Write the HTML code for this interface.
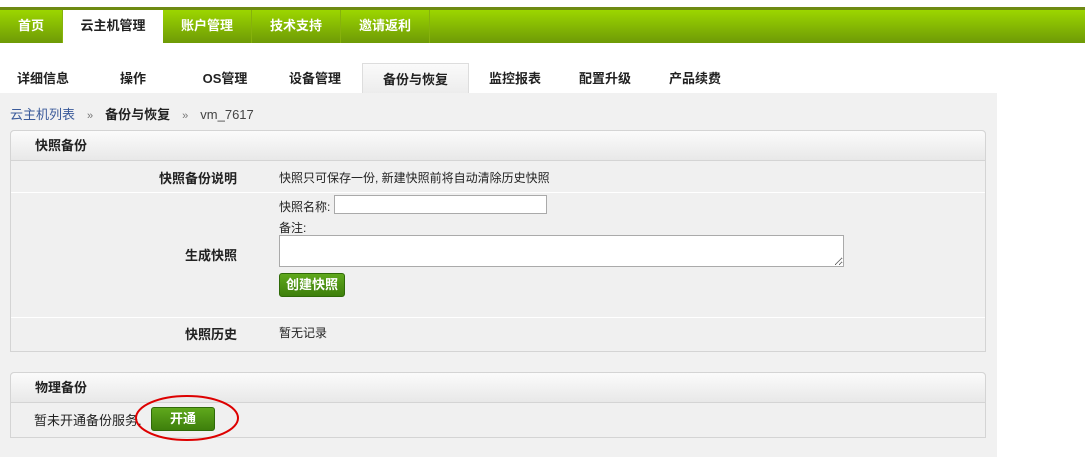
<!DOCTYPE html>
<html><head><meta charset="utf-8"><style>
*{margin:0;padding:0;box-sizing:border-box}
body{width:1085px;height:468px;background:#fff;font-family:"Liberation Sans","Noto Sans CJK SC",sans-serif;font-size:12px;color:#222;position:relative;overflow:hidden}
.top{position:absolute;left:0;top:7px;width:1085px;height:36px;border-top:3px solid #6e8a12;background:linear-gradient(#9cd600,#6e9a06)}
.top div{position:absolute;top:0;height:33px;line-height:32px;color:#fff;font-weight:bold;font-size:13px;text-align:center;border-right:1px solid #86b20c}
.top .on{background:#fff;color:#222;border:none}
.sub div{position:absolute;top:63px;height:31px;line-height:32px;font-weight:bold;font-size:13px;text-align:center}
.sub .on{background:linear-gradient(#fafafa,#ececec);border:1px solid #ddd;border-bottom:none}
.main{position:absolute;left:0;top:93px;width:997px;height:364px;background:#f1f1f1}
.panel{position:absolute;left:10px;width:976px;border:1px solid #d4d4d4;border-radius:4px 4px 0 0;background:#f0f0f0}
.ph{height:30px;line-height:30px;padding-left:24px;font-weight:bold;font-size:13px;background:linear-gradient(#fbfbfb,#e8e8e8);border-bottom:1px solid #d4d4d4;border-radius:4px 4px 0 0}
.row{position:absolute;left:0;width:974px;border-bottom:1px solid #fff}
.lbl{position:absolute;right:748px;font-weight:bold;font-size:13px}
.val{position:absolute;left:268px}
.btn{position:absolute;background:linear-gradient(#5fa81c,#3e7f0c);border:1px solid #2f6a08;border-radius:3px;color:#fff;font-weight:bold;font-size:13px;text-align:center}
input,textarea{position:absolute;border:1px solid #aaa;background:#fff}
</style></head><body>
<div class="top">
<div style="left:0;width:63px">首页</div>
<div class="on" style="left:63px;width:100px">云主机管理</div>
<div style="left:163px;width:89px">账户管理</div>
<div style="left:252px;width:89px">技术支持</div>
<div style="left:341px;width:89px">邀请返利</div>
</div>
<div class="sub">
<div style="left:0;width:86px">详细信息</div>
<div style="left:100px;width:66px">操作</div>
<div style="left:190px;width:70px">OS管理</div>
<div style="left:275px;width:80px">设备管理</div>
<div class="on" style="left:362px;width:107px">备份与恢复</div>
<div style="left:475px;width:80px">监控报表</div>
<div style="left:565px;width:80px">配置升级</div>
<div style="left:655px;width:80px">产品续费</div>
</div>
<div class="main">
<div style="position:absolute;left:10px;top:11px;font-size:13px"><span style="color:#3a5a9a">云主机列表</span><span style="color:#777;margin:0 12px;font-size:11px">»</span><b>备份与恢复</b><span style="color:#777;margin:0 12px;font-size:11px">»</span><span style="color:#444">vm_7617</span></div>
<div class="panel" style="top:37px;height:222px">
<div class="ph">快照备份</div>
<div class="row" style="top:30px;height:32px"><span class="lbl" style="top:7px">快照备份说明</span><span class="val" style="top:8px">快照只可保存一份, 新建快照前将自动清除历史快照</span></div>
<div class="row" style="top:62px;height:125px"><span class="lbl" style="top:52px">生成快照</span>
<span class="val" style="top:5px">快照名称:</span><input style="left:323px;top:2px;width:213px;height:19px">
<span class="val" style="top:26px">备注:</span><textarea style="left:268px;top:42px;width:565px;height:32px"></textarea>
<div class="btn" style="left:268px;top:80px;width:66px;height:24px;line-height:22px">创建快照</div></div>
<div class="row" style="top:187px;height:33px;border:none"><span class="lbl" style="top:6px">快照历史</span><span class="val" style="top:6px">暂无记录</span></div>
</div>
<div class="panel" style="top:279px;height:66px">
<div class="ph">物理备份</div>
<span style="position:absolute;left:23px;top:37px;font-size:13px">暂未开通备份服务.</span>
<div class="btn" style="left:140px;top:34px;width:64px;height:24px;line-height:22px">开通</div>
</div>
</div>
<svg style="position:absolute;left:0;top:0" width="1085" height="468"><ellipse cx="187" cy="418" rx="51" ry="22" fill="none" stroke="#d00" stroke-width="2"/></svg>
</body></html>
